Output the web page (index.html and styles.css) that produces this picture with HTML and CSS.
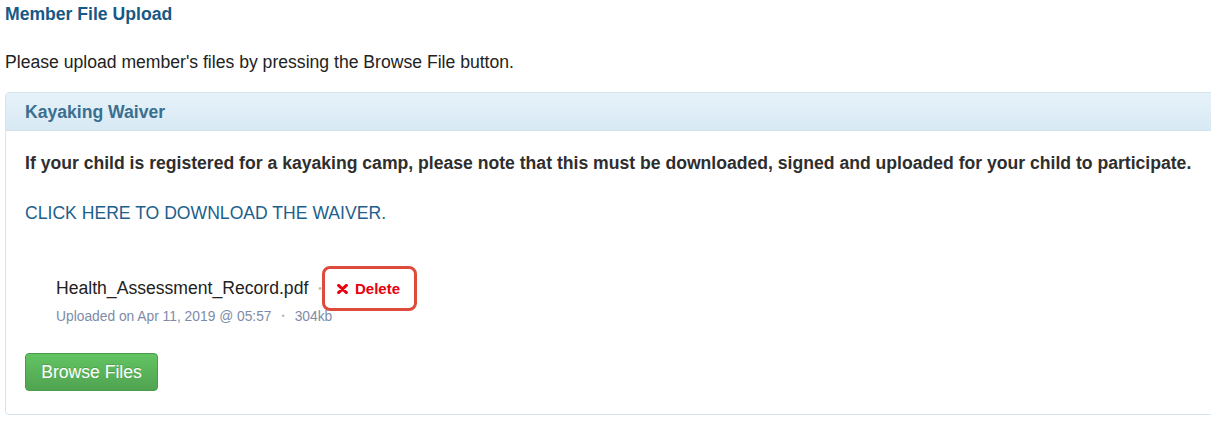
FILE: index.html
```html
<!DOCTYPE html>
<html>
<head>
<meta charset="utf-8">
<link rel="stylesheet" href="styles.css">
</head>
<body>
<div class="page">
  <h3 class="title">Member File Upload</h3>
  <p class="intro">Please upload member's files by pressing the Browse File button.</p>
  <div class="panel">
    <div class="panel-head">Kayaking Waiver</div>
    <div class="panel-body">
      <p class="note">If your child is registered for a kayaking camp, please note that this must be downloaded, signed and uploaded for your child to participate.</p>
      <p class="dl"><a href="#">CLICK HERE TO DOWNLOAD THE WAIVER.</a></p>
      <div class="file">
        <div class="file-row">
          <span class="fname">Health_Assessment_Record.pdf</span>
          <span class="sep">•</span>
          <span class="delete"><svg class="x" width="11" height="10" viewBox="0 0 11 10"><path d="M1.6 1.4 L9.4 8.6 M9.4 1.4 L1.6 8.6" stroke="#e8000e" stroke-width="3" stroke-linecap="round"/></svg>Delete</span>
        </div>
        <div class="meta">Uploaded on Apr 11, 2019 @ 05:57<span class="dot">•</span>304kb</div>
      </div>
      <button class="browse">Browse Files</button>
    </div>
  </div>
</div>
</body>
</html>
```
FILE: styles.css
```css
html, body {
  margin: 0;
  padding: 0;
  background: #fff;
  overflow: hidden;
}
.page {
  font-family: "Liberation Sans", Arial, sans-serif;
  font-size: 17.6px;
  color: #222;
  padding: 4px 0 0 5px;
}
.title {
  margin: 0;
  font-size: 17.6px;
  line-height: 20px;
  font-weight: bold;
  color: #165886;
}
.intro {
  margin: 28px 0 0 0;
  line-height: 20px;
}
.panel {
  margin-top: 20px;
  margin-right: -10px;
  border: 1px solid #d6e6ee;
  border-radius: 4px;
  height: 323px;
  box-sizing: border-box;
}
.panel-head {
  height: 38px;
  box-sizing: border-box;
  padding: 9px 19px;
  line-height: 20px;
  font-weight: bold;
  color: #3a6f90;
  background: linear-gradient(#e6f2f9, #d8e9f4);
  border-bottom: 1px solid #d0e2ec;
  border-radius: 3px 3px 0 0;
}
.panel-body {
  padding: 22px 19px 0 19px;
}
.note {
  margin: 0;
  font-weight: bold;
  color: #2e2e2e;
  line-height: 20px;
  white-space: nowrap;
}
.dl {
  margin: 30px 0 0 0;
  line-height: 20px;
}
.dl a {
  color: #1c5f8c;
  text-decoration: none;
}
.file {
  margin-top: 55px;
  padding-left: 31px;
  position: relative;
}
.file-row {
  display: flex;
  align-items: center;
  height: 20px;
}
.fname {
  color: #222;
}
.sep {
  color: #bbb;
  font-size: 10px;
  margin-left: 10px;
}
.delete {
  position: absolute;
  left: 297px;
  top: -12px;
  width: 95px;
  height: 45px;
  box-sizing: border-box;
  border: 3px solid #dc4b3c;
  border-radius: 8px;
  background: #fff;
  color: #e8000e;
  font-weight: bold;
  font-size: 15px;
  display: flex;
  align-items: center;
  justify-content: center;
  gap: 7px;
  padding-right: 2px;
}
.delete .x {
  display: block;
}
.meta {
  margin-top: 10px;
  font-size: 13.8px;
  line-height: 16px;
  color: #7d8ba8;
}
.dot {
  margin: 0 10px;
  color: #b5b9c4;
  font-size: 9px;
  vertical-align: 2px;
}
.browse {
  display: block;
  margin-top: 28px;
  width: 133px;
  height: 38px;
  border: 1px solid #4a9a4a;
  border-radius: 4px;
  background: linear-gradient(#62c462, #51a351);
  color: #fff;
  font-family: "Liberation Sans", Arial, sans-serif;
  font-size: 17.6px;
  padding: 0;
  text-shadow: 0 -1px 0 rgba(0,0,0,0.15);
}
```
